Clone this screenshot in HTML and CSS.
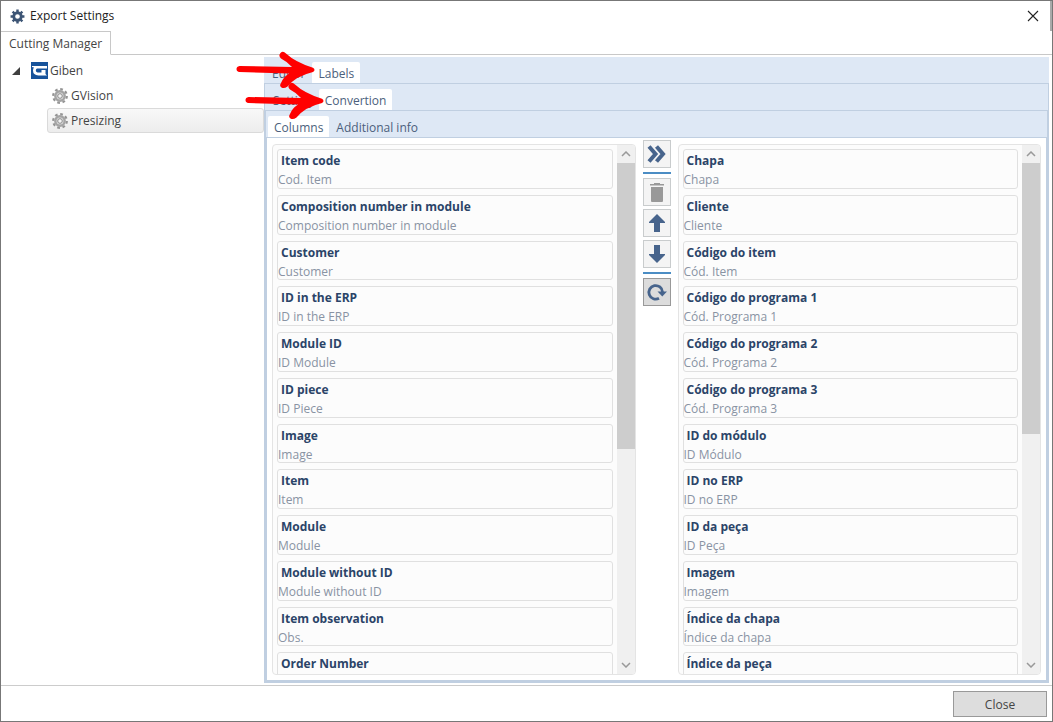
FILE: index.html
```html
<!DOCTYPE html>
<html lang="en">
<head>
<meta charset="utf-8">
<title>Export Settings</title>
<link rel="stylesheet" href="styles.css">
</head>
<body>
<div class="window">
  <header class="titlebar">
    <svg class="title-icon" viewBox="0 0 16 16"><circle cx="8" cy="8" r="4" fill="none" stroke="#3d5575" stroke-width="3"/><g stroke="#3d5575" stroke-width="2.6"><path d="M8 0.6v3M8 12.4v3M0.6 8h3M12.4 8h3M2.8 2.8l2 2M11.2 11.2l2 2M13.2 2.8l-2 2M4.8 11.2l-2 2"/></g></svg>
    <h1 class="title">Export Settings</h1>
    <button class="close-x" type="button" aria-label="Close window"><svg viewBox="0 0 12 12"><path d="M1 1l10 10M11 1L1 11" stroke="#222" stroke-width="1.1"/></svg></button>
  </header>
  <nav class="main-tabs"><button class="main-tab" type="button">Cutting Manager</button></nav>
  <main class="body">
    <aside class="tree">
      <div class="node root">
        <svg class="expander" viewBox="0 0 8 8"><path d="M8 0v8H0z" fill="#404040"/></svg>
        <svg class="logo" viewBox="0 0 17 17"><rect width="17" height="17" fill="#17539b"/><path d="M1 4H16V6.500H6Q4.800 7 4.800 8.500T6.500 10.500H10.500V8H14.500V12L16 13.500H7.500Q2 13 2 8.500Q2 6.500 3 5.500L1 5z" fill="#fff"/></svg>
        <span>Giben</span>
      </div>
      <div class="node child">
        <svg class="gear" viewBox="0 0 16 16"><use href="#gear"/></svg><span>GVision</span>
      </div>
      <div class="node child selected">
        <svg class="gear" viewBox="0 0 16 16"><use href="#gear"/></svg><span>Presizing</span>
      </div>
    </aside>
    <section class="panel">
      <nav class="strip"><button type="button" class="tab">Editor</button><button type="button" class="tab active">Labels</button></nav>
      <div class="nested">
        <nav class="strip"><button type="button" class="tab">Setting</button><button type="button" class="tab active">Convertion</button></nav>
        <div class="nested">
          <nav class="strip"><button type="button" class="tab active">Columns</button><button type="button" class="tab">Additional info</button></nav>
          <div class="content">
            <div class="list">
              <div class="viewport"><ul class="cards">
                <li class="card"><b>Item code</b><span>Cod. Item</span></li>
                <li class="card"><b>Composition number in module</b><span>Composition number in module</span></li>
                <li class="card"><b>Customer</b><span>Customer</span></li>
                <li class="card"><b>ID in the ERP</b><span>ID in the ERP</span></li>
                <li class="card"><b>Module ID</b><span>ID Module</span></li>
                <li class="card"><b>ID piece</b><span>ID Piece</span></li>
                <li class="card"><b>Image</b><span>Image</span></li>
                <li class="card"><b>Item</b><span>Item</span></li>
                <li class="card"><b>Module</b><span>Module</span></li>
                <li class="card"><b>Module without ID</b><span>Module without ID</span></li>
                <li class="card"><b>Item observation</b><span>Obs.</span></li>
                <li class="card"><b>Order Number</b></li>
              </ul></div>
              <div class="scrollbar">
                <svg class="chev" viewBox="0 0 10 6"><path d="M1 5l4-4 4 4"/></svg>
                <div class="track"><div class="thumb long"></div></div>
                <svg class="chev" viewBox="0 0 10 6"><path d="M1 1l4 4 4-4"/></svg>
              </div>
            </div>
            <div class="tools">
              <button class="tool" type="button" aria-label="Add all"><svg viewBox="0 0 22 22"><path d="M3 3.500l6.500 7.500L3 18.500M10.500 3.500L17 11l-6.500 7.500" fill="none" stroke="#47648c" stroke-width="4"/></svg></button>
              <hr class="rule">
              <button class="tool" type="button" aria-label="Delete" disabled><svg viewBox="0 0 22 22"><path d="M4 3h4V2h6v1h4v1.500H4zM5 6h12v14q0 1-1 1H6q-1 0-1-1z" fill="#999"/></svg></button>
              <button class="tool" type="button" aria-label="Move up"><svg viewBox="0 0 22 22"><path d="M11 2l8 8v1h-5v9H8v-9H3v-1z" fill="#47648c"/></svg></button>
              <button class="tool" type="button" aria-label="Move down"><svg viewBox="0 0 22 22"><path d="M11 20l8-8v-1h-5V2H8v9H3v1z" fill="#47648c"/></svg></button>
              <hr class="rule">
              <button class="tool pressed" type="button" aria-label="Refresh"><svg viewBox="0 0 22 22"><path d="M13 17.300A6.800 6.800 0 1 1 16.500 11" fill="none" stroke="#47648c" stroke-width="2.800"/><path d="M11.500 10.500h9.500L16.300 15.500z" fill="#47648c"/></svg></button>
            </div>
            <div class="list">
              <div class="viewport"><ul class="cards">
                <li class="card"><b>Chapa</b><span>Chapa</span></li>
                <li class="card"><b>Cliente</b><span>Cliente</span></li>
                <li class="card"><b>Código do item</b><span>Cód. Item</span></li>
                <li class="card"><b>Código do programa 1</b><span>Cód. Programa 1</span></li>
                <li class="card"><b>Código do programa 2</b><span>Cód. Programa 2</span></li>
                <li class="card"><b>Código do programa 3</b><span>Cód. Programa 3</span></li>
                <li class="card"><b>ID do módulo</b><span>ID Módulo</span></li>
                <li class="card"><b>ID no ERP</b><span>ID no ERP</span></li>
                <li class="card"><b>ID da peça</b><span>ID Peça</span></li>
                <li class="card"><b>Imagem</b><span>Imagem</span></li>
                <li class="card"><b>Índice da chapa</b><span>Índice da chapa</span></li>
                <li class="card"><b>Índice da peça</b></li>
              </ul></div>
              <div class="scrollbar">
                <svg class="chev" viewBox="0 0 10 6"><path d="M1 5l4-4 4 4"/></svg>
                <div class="track"><div class="thumb"></div></div>
                <svg class="chev" viewBox="0 0 10 6"><path d="M1 1l4 4 4-4"/></svg>
              </div>
            </div>
          </div>
        </div>
      </div>
    </section>
  </main>
  <footer class="footer"><button class="close" type="button">Close</button></footer>
  <svg class="arrows" viewBox="0 0 100 72"><path id="arrow" d="M9.500 16L62 17Q57 11.500 51 8.500Q48 5.500 50.500 3T56 3.500Q65 12 83 17.800Q86 20 83 22Q66 26 57.500 36.500Q54 39 51.500 37.500T51 33Q53 27.500 59 23.500L9.500 22Q6.500 21.500 6.500 19T9.500 16z" fill="#f00"/><use href="#arrow" x="9" y="31"/></svg>
</div>
<svg class="defs" aria-hidden="true"><symbol id="gear" viewBox="0 0 16 16"><circle cx="8" cy="8" r="6.800" fill="none" stroke="#949494" stroke-width="2.200" stroke-dasharray="2.700 2.640"/><circle cx="8" cy="8" r="4.700" fill="#ddd" stroke="#a4a4a4" stroke-width="2.400"/><circle cx="8" cy="8" r="2.300" fill="#f4f4f4" stroke="#8c8c8c"/></symbol></svg>
</body>
</html>
```
FILE: styles.css
```css
* { box-sizing: border-box; }
body { margin: 0; font: 12px/16px "Open Sans", "Noto Sans", sans-serif; color: #444; background: #fff; }
button { font: inherit; color: inherit; padding: 0; border: 0; background: none; }
svg { display: block; }
.defs { position: absolute; width: 0; height: 0; }
.window { position: relative; display: flex; flex-direction: column; height: 100vh; border: 1px solid #777; }
.titlebar { display: flex; align-items: center; height: 30px; padding: 0 11px 0 9px; gap: 5px; border-right: 2px solid #aaa; }
.title-icon { width: 15px; height: 15px; }
.title { margin: 0; flex: 1; font-size: 12px; font-weight: 400; color: #222; }
.close-x svg { width: 12px; height: 12px; }
.main-tabs { height: 24px; border-bottom: 1px solid #c8c8c8; display: flex; }
.main-tab { height: 24px; padding: 2px 8px 0; border: 1px solid #c8c8c8; border-bottom-color: #fff; border-left: 0; background: #fff; }
.body { flex: 1; min-height: 0; display: flex; padding: 2px 3px 2px 0; }
.tree { width: 263px; flex: none; padding-top: 1px; }
.node { display: flex; align-items: center; height: 25px; gap: 3px; }
.root { padding-left: 11px; gap: 2px; }
.expander { width: 8px; height: 8px; margin-right: 9px; }
.logo { width: 17px; height: 17px; }
.child { margin-left: 46px; padding-left: 4px; border: 1px solid transparent; border-radius: 3px; }
.selected { background: linear-gradient(#f8f8f8, #ededed); border-color: #dadada; }
.gear { width: 16px; height: 16px; }
.panel, .nested { display: flex; flex-direction: column; flex: 1; min-width: 0; min-height: 0; }
.panel { background: #dee8f5; color: #4c5f7c; }
.nested { border: 1px solid #c0cfe1; }
.strip { display: flex; align-items: flex-end; gap: 1px; height: 26px; flex: none; padding-left: 2px; background: #dee8f5; }
.tab { height: 21px; padding: 2px 6px 0; }
.active { background: #fff; border-radius: 2px 2px 0 0; }
.content { flex: 1; min-height: 0; display: flex; gap: 7px; background: #fff; border: 1px solid #c0cfe1; padding: 6px 5px 5px; }
.list { flex: 1; min-width: 0; display: flex; border: 1px solid #e4e4e4; border-radius: 4px; overflow: hidden; background: #fcfcfc; }
.viewport { flex: 1; min-width: 0; overflow: hidden; padding: 4px 4px 0; }
.cards { list-style: none; margin: 0; padding: 0; display: grid; grid-template-rows: repeat(12, 1fr); gap: 6px; height: 543px; }
.card { display: flex; flex-direction: column; border: 1px solid #e0e0e0; border-radius: 3px; min-height: 0; }
.card b { padding: 3px 3px 0; line-height: 16px; color: #2b4468; }
.card span { padding-top: 3px; line-height: 16px; color: #8993a3; }
.scrollbar { width: 18px; flex: none; display: flex; flex-direction: column; align-items: center; background: #f0f0f0; padding: 6px 0; gap: 6px; }
.chev { width: 10px; height: 6px; fill: none; stroke: #999; stroke-width: 1.5; }
.track { flex: 1; width: 100%; }
.thumb { height: 55%; background: #cdcdcd; }
.long { height: 58%; }
.tools { width: 28px; flex: none; display: flex; flex-direction: column; gap: 3px; margin-top: -4px; }
.tool { width: 28px; height: 28px; flex: none; display: grid; place-items: center; border: 1px solid #c9cccd; background: #f4f4f4; }
.tool svg { width: 22px; height: 22px; }
.pressed { background: #dcdcdc; border-color: #999; }
.rule { width: 100%; height: 2px; margin: 1px 0; border: 0; background: #4b8dc4; }
.footer { height: 36px; flex: none; display: flex; justify-content: flex-end; align-items: flex-start; border-top: 1px solid #ccc; padding: 5px; }
.close { width: 94px; height: 26px; padding-top: 1px; border: 1px solid #999; background: #ddd; }
.arrows { position: absolute; left: 229px; top: 49px; width: 100px; height: 72px; }
```
